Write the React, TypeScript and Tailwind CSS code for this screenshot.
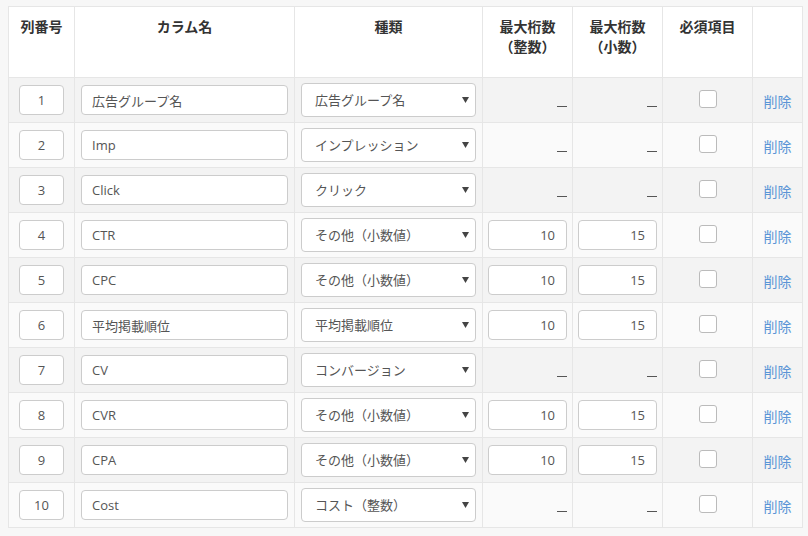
import { useState } from "react";

type Row = {
  no: number;
  name: string;
  kind: string;
  intDigits?: string;
  decDigits?: string;
};

const ROWS: Row[] = [
  { no: 1, name: "広告グループ名", kind: "広告グループ名" },
  { no: 2, name: "Imp", kind: "インプレッション" },
  { no: 3, name: "Click", kind: "クリック" },
  { no: 4, name: "CTR", kind: "その他（小数値）", intDigits: "10", decDigits: "15" },
  { no: 5, name: "CPC", kind: "その他（小数値）", intDigits: "10", decDigits: "15" },
  { no: 6, name: "平均掲載順位", kind: "平均掲載順位", intDigits: "10", decDigits: "15" },
  { no: 7, name: "CV", kind: "コンバージョン" },
  { no: 8, name: "CVR", kind: "その他（小数値）", intDigits: "10", decDigits: "15" },
  { no: 9, name: "CPA", kind: "その他（小数値）", intDigits: "10", decDigits: "15" },
  { no: 10, name: "Cost", kind: "コスト（整数）" },
];

const KINDS = [
  "広告グループ名",
  "インプレッション",
  "クリック",
  "その他（小数値）",
  "平均掲載順位",
  "コンバージョン",
  "コスト（整数）",
];

const inputCls =
  "h-[30px] rounded-[4px] border border-[#cccccc] bg-white text-[13px] text-[#555555] outline-none font-['Open_Sans','Noto_Sans_CJK_JP',sans-serif]";

function KindSelect({ value }: { value: string }) {
  const [v, setV] = useState(value);
  return (
    <div className="relative">
      <select
        value={v}
        onChange={(e) => setV(e.target.value)}
        className="block h-[34px] w-full appearance-none rounded-[4px] border border-[#cccccc] bg-white pl-[13px] text-[13px] text-[#555555] outline-none"
      >
        {KINDS.map((k) => (
          <option key={k} value={k}>
            {k}
          </option>
        ))}
      </select>
      <svg
        className="pointer-events-none absolute right-[7px] top-[14px]"
        width="7"
        height="6"
        viewBox="0 0 7 6"
      >
        <path d="M0 0h7L3.5 6z" fill="#444444" />
      </svg>
    </div>
  );
}

function Dash() {
  return (
    <div className="flex justify-end pr-[-1px] pt-[12px]">
      <span className="block h-px w-[10px] bg-[#555555]" />
    </div>
  );
}

function ColumnRow({ row, odd }: { row: Row; odd: boolean }) {
  const td = "border border-[#e6e6e6] align-middle";
  return (
    <tr className={`h-[45px] ${odd ? "bg-[#f3f3f3]" : "bg-[#fafafa]"}`}>
      <td className={td}>
        <input
          defaultValue={row.no}
          className={`${inputCls} mx-auto block w-[45px] text-center`}
        />
      </td>
      <td className={`${td} px-[6px]`}>
        <input
          defaultValue={row.name}
          className={`${inputCls} block w-full pl-[10px]`}
        />
      </td>
      <td className={`${td} px-[6px]`}>
        <KindSelect value={row.kind} />
      </td>
      <td className={`${td} px-[5px]`}>
        {row.intDigits ? (
          <input
            defaultValue={row.intDigits}
            className={`${inputCls} block w-full pr-[11px] text-right`}
          />
        ) : (
          <Dash />
        )}
      </td>
      <td className={`${td} px-[5px]`}>
        {row.decDigits ? (
          <input
            defaultValue={row.decDigits}
            className={`${inputCls} block w-full pr-[11px] text-right`}
          />
        ) : (
          <Dash />
        )}
      </td>
      <td className={td}>
        <input
          type="checkbox"
          className="mx-auto -mt-[2px] block h-[18px] w-[18px] appearance-none rounded-[3px] border border-[#bbbbbb] bg-white"
        />
      </td>
      <td className={`${td} text-center`}>
        <a href="#" className="text-[14px] text-[#5b95d6]">
          削除
        </a>
      </td>
    </tr>
  );
}

export default function App() {
  const th =
    "h-[71px] border border-[#e6e6e6] bg-white pt-[9px] align-top text-center text-[14px] font-bold leading-[20px] text-[#333333]";
  return (
    <div className="min-h-[536px] bg-[#f7f7f7] pl-[8px] pt-[6px] font-['Noto_Sans_CJK_JP',sans-serif]">
      <table className="w-[794px] table-fixed border-collapse bg-white">
        <colgroup>
          <col className="w-[66px]" />
          <col className="w-[220px]" />
          <col className="w-[188px]" />
          <col className="w-[90px]" />
          <col className="w-[90px]" />
          <col className="w-[90px]" />
          <col className="w-[50px]" />
        </colgroup>
        <thead>
          <tr>
            <th className={th}>列番号</th>
            <th className={th}>カラム名</th>
            <th className={th}>種類</th>
            <th className={th}>
              最大桁数
              <br />
              （整数）
            </th>
            <th className={th}>
              最大桁数
              <br />
              （小数）
            </th>
            <th className={th}>必須項目</th>
            <th className={th}></th>
          </tr>
        </thead>
        <tbody>
          {ROWS.map((r, i) => (
            <ColumnRow key={r.no} row={r} odd={i % 2 === 0} />
          ))}
        </tbody>
      </table>
    </div>
  );
}
